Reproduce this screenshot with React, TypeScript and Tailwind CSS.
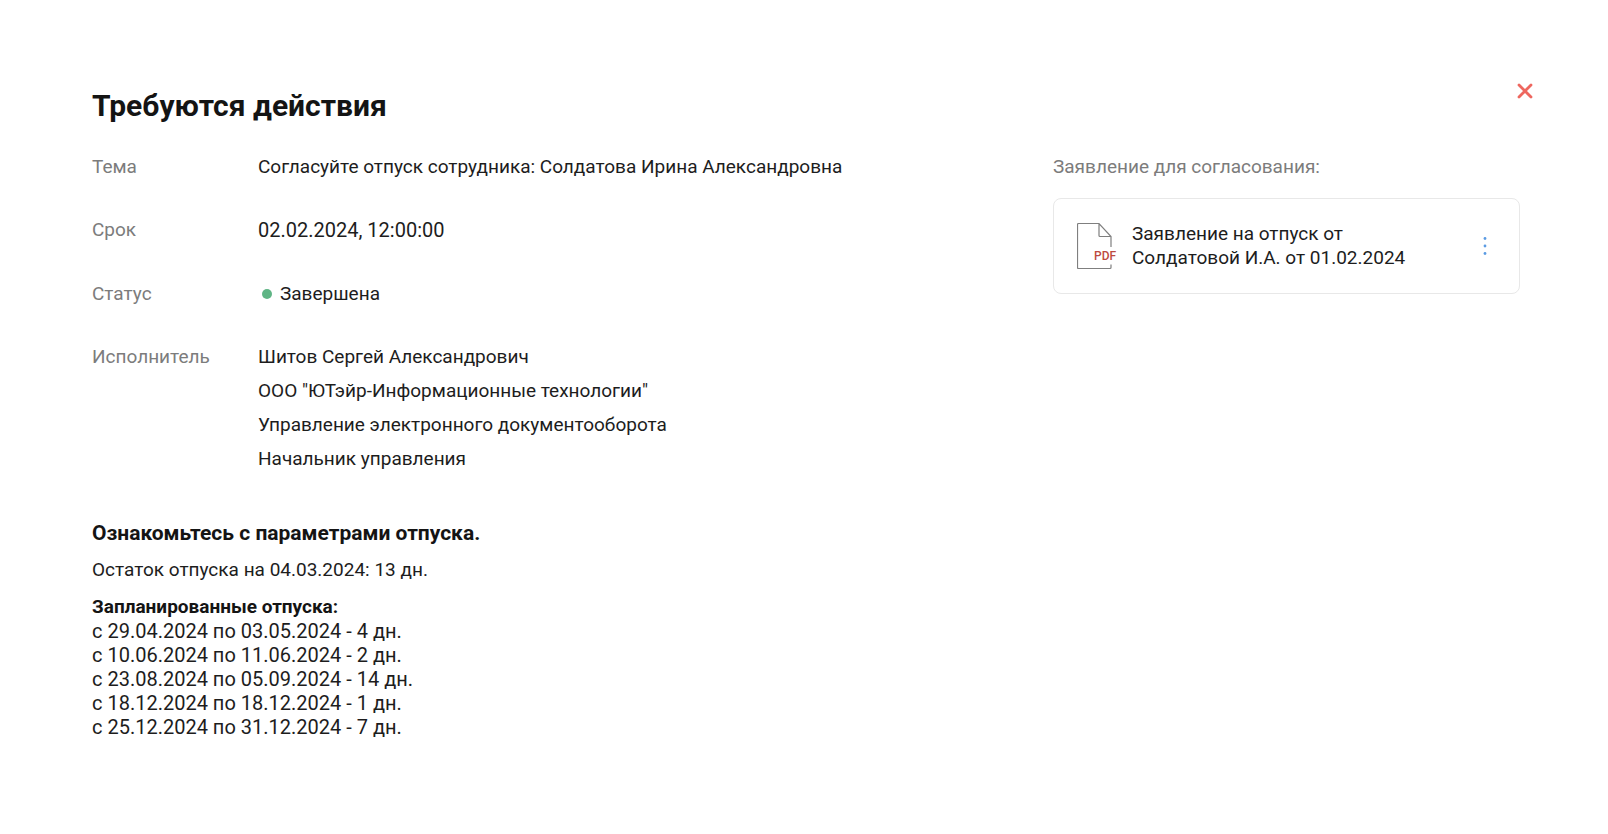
import type { ReactNode } from "react";

const department = [
  "Шитов Сергей Александрович",
  'ООО "ЮТэйр-Информационные технологии"',
  "Управление электронного документооборота",
  "Начальник управления",
];

const vacations = [
  { from: "29.04.2024", to: "03.05.2024", days: 4 },
  { from: "10.06.2024", to: "11.06.2024", days: 2 },
  { from: "23.08.2024", to: "05.09.2024", days: 14 },
  { from: "18.12.2024", to: "18.12.2024", days: 1 },
  { from: "25.12.2024", to: "31.12.2024", days: 7 },
];

function Row({ label, children }: { label: string; children: ReactNode }) {
  return (
    <div className="flex">
      <dt className="w-[166px] shrink-0 text-[#7c7c7c]">{label}</dt>
      <dd>{children}</dd>
    </div>
  );
}

function PdfIcon() {
  return (
    <svg width="40" height="48" viewBox="0 0 40 48" fill="none" className="shrink-0" aria-hidden="true">
      <path
        d="M34 25V14.5L22 1.500H1.500a1 1 0 0 0-1 1V45.500a1 1 0 0 0 1 1H33a1 1 0 0 0 1-1V42.500M22 1.500V13.500a1 1 0 0 0 1 1H34"
        stroke="#7f7f7f"
        strokeWidth="1.200"
      />
      <text x="17" y="38" fontSize="12" fontWeight="500" fill="#bd4a40" className="font-['Roboto',sans-serif]">
        PDF
      </text>
    </svg>
  );
}

export default function App() {
  return (
    <main className="min-h-screen bg-white pt-[82px] pr-[74px] pb-16 pl-[92px] font-['Roboto','Liberation_Sans',sans-serif] text-[19px] text-[#1d1d1d]">
      <header className="flex items-start justify-between">
        <h1 className="pt-1 text-[30px] leading-10 font-bold text-[#141414]">Требуются действия</h1>
        <button type="button" aria-label="Закрыть" className="p-px text-[#ee675f]">
          <svg width="16" height="16" viewBox="0 0 16 16" stroke="currentColor" strokeWidth="2.800" strokeLinecap="round">
            <path d="M2 2l12 12M14 2L2 14" />
          </svg>
        </button>
      </header>

      <div className="mt-6 mr-[14px] flex items-start justify-between gap-8">
        <dl className="flex flex-col gap-[29px] leading-[34px]">
          <Row label="Тема">Согласуйте отпуск сотрудника: Солдатова Ирина Александровна</Row>
          <Row label="Срок">
            <time className="text-[20px]">02.02.2024, 12:00:00</time>
          </Row>
          <Row label="Статус">
            <span className="flex items-center gap-2 pl-1">
              <span className="size-[10px] rounded-full bg-[#5fb585]" />
              Завершена
            </span>
          </Row>
          <Row label="Исполнитель">
            {department.map((line) => (
              <p key={line}>{line}</p>
            ))}
          </Row>
        </dl>

        <aside className="w-[467px] shrink-0">
          <h2 className="leading-[34px] text-[#7c7c7c]">Заявление для согласования:</h2>
          <div className="mt-[14px] flex items-center rounded-lg border border-[#e8e8e8] py-[23px] pr-6 pl-[23px]">
            <PdfIcon />
            <a href="#" className="ml-[15px] flex-1 leading-6">
              Заявление на отпуск от
              <br />
              Солдатовой И.А. от 01.02.2024
            </a>
            <button type="button" aria-label="Действия с документом" className="text-[#5b9be3]">
              <svg width="20" height="20" viewBox="0 0 20 20" fill="currentColor">
                <circle cx="10" cy="2.500" r="1.400" />
                <circle cx="10" cy="10" r="1.400" />
                <circle cx="10" cy="17.500" r="1.400" />
              </svg>
            </button>
          </div>
        </aside>
      </div>

      <section className="mt-10">
        <h2 className="text-[21px] leading-[34px] font-bold text-[#141414]">Ознакомьтесь с параметрами отпуска.</h2>
        <p className="mt-[3px] leading-[34px]">Остаток отпуска на 04.03.2024: 13 дн.</p>
        <h3 className="mt-2 leading-6 font-bold text-[#141414]">Запланированные отпуска:</h3>
        <ul className="text-[20px] leading-6">
          {vacations.map((v) => (
            <li key={v.from}>
              с {v.from} по {v.to} - {v.days} дн.
            </li>
          ))}
        </ul>
      </section>
    </main>
  );
}
